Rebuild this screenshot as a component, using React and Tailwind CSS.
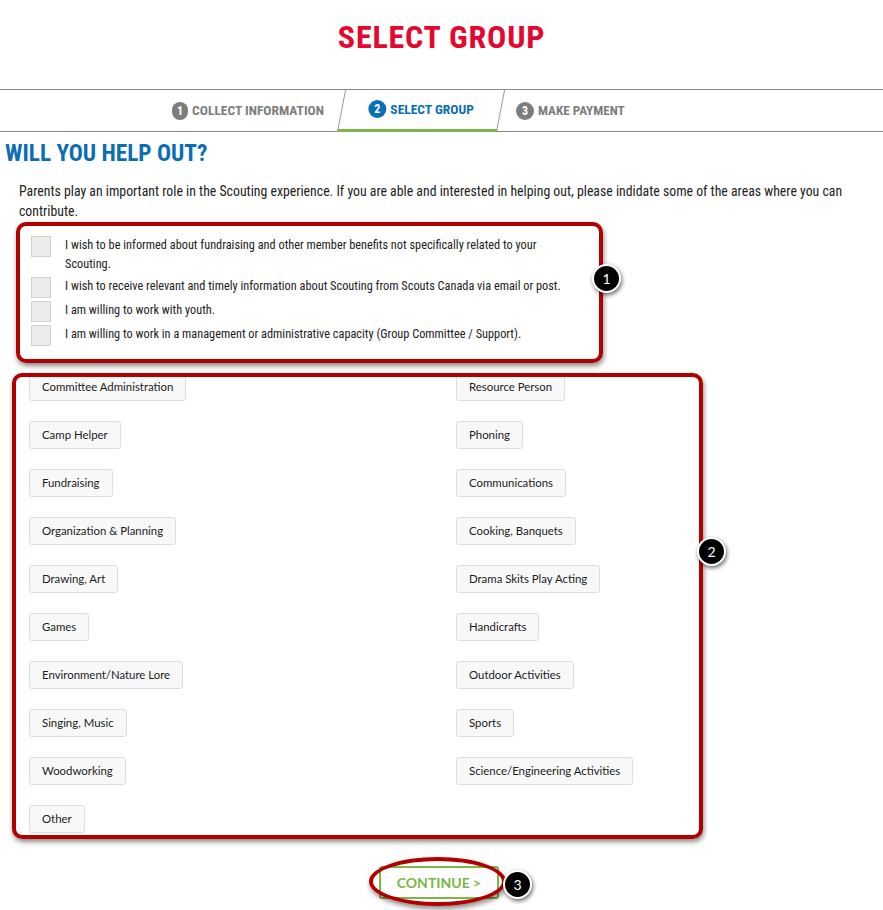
import React from 'react';

const CONDENSED = { fontFamily: '"Roboto Condensed", Roboto, "Liberation Sans", sans-serif' };
const BODY = { fontFamily: 'Lato, "Liberation Sans", Arial, sans-serif' };

const CHECKS = [
  'I wish to be informed about fundraising and other member benefits not specifically related to your Scouting.',
  'I wish to receive relevant and timely information about Scouting from Scouts Canada via email or post.',
  'I am willing to work with youth.',
  'I am willing to work in a management or administrative capacity (Group Committee / Support).',
];

const AREAS = [
  ['Committee Administration', 'Resource Person'],
  ['Camp Helper', 'Phoning'],
  ['Fundraising', 'Communications'],
  ['Organization & Planning', 'Cooking, Banquets'],
  ['Drawing, Art', 'Drama Skits Play Acting'],
  ['Games', 'Handicrafts'],
  ['Environment/Nature Lore', 'Outdoor Activities'],
  ['Singing, Music', 'Sports'],
  ['Woodworking', 'Science/Engineering Activities'],
  ['Other', null],
];

const StepDot = ({ n, active }) => (
  <span
    className={`w-[18px] h-[18px] rounded-full flex items-center justify-center text-white text-[12px] font-bold leading-none ${active ? 'bg-[#0b6db3]' : 'bg-[#7d7d7d]'}`}
  >
    {n}
  </span>
);

const AreaButton = ({ label }) => (
  <button
    className="h-[28px] px-[12px] bg-[#f8f8f8] border border-[#dedede] rounded-[3px] text-[11.4px] text-[#1c1c1c]"
    style={BODY}
  >
    {label}
  </button>
);

const Callout = ({ n, className }) => (
  <div
    className={`absolute w-[29px] h-[29px] rounded-full bg-black border-2 border-white shadow-[1px_2px_4px_rgba(0,0,0,0.6)] flex items-center justify-center text-white text-[14px] ${className}`}
    style={BODY}
  >
    {n}
  </div>
);

export default function App() {
  return (
    <div className="relative w-[883px] min-h-[910px] bg-white overflow-hidden">
      {/* title */}
      <div className="h-[89px] pt-[21px] text-center">
        <h1 className="text-[32px] leading-[32px] font-bold tracking-[0.8px] text-[#e5072f]" style={CONDENSED}>
          SELECT GROUP
        </h1>
      </div>

      {/* stepper */}
      <div className="h-[43px] border-y border-[#8a8a8a] flex items-stretch pl-[172px]" style={CONDENSED}>
        <div className="w-[152px] flex items-center gap-[4px]">
          <StepDot n="1" />
          <span className="text-[13.5px] font-bold text-[#7d7d7d] whitespace-nowrap">COLLECT INFORMATION</span>
        </div>
        <div className="ml-[17px] w-[160px] -mb-px border-x border-[#9a9a9a] border-b-[3px] border-b-[#7ab648] skew-x-[-11deg] flex items-center justify-center">
          <div className="skew-x-[11deg] flex items-center gap-[4px]">
            <StepDot n="2" active />
            <span className="text-[13.5px] font-bold text-[#0b6db3] whitespace-nowrap">SELECT GROUP</span>
          </div>
        </div>
        <div className="ml-[15px] flex items-center gap-[4px]">
          <StepDot n="3" />
          <span className="text-[13.2px] font-bold text-[#7d7d7d] whitespace-nowrap">MAKE PAYMENT</span>
        </div>
      </div>

      {/* help out */}
      <h2 className="mt-[9px] px-[5px] text-[23.3px] leading-[24px] font-bold text-[#0b6db3]" style={CONDENSED}>
        WILL YOU HELP OUT?
      </h2>
      <p className="mt-[16px] pl-[19px] pr-[15px] text-[13.8px] leading-[20px] text-[#222]" style={CONDENSED}>
        Parents play an important role in the Scouting experience. If you are able and interested in helping out, please indidate some of the areas where you can contribute.
      </p>

      <div className="mt-[15px] pl-[31px] flex flex-col gap-[3px]" style={CONDENSED}>
        {CHECKS.map((c) => (
          <label key={c} className="flex items-start gap-[14px]">
            <span className="shrink-0 w-[20px] h-[21px] bg-[#ececec] border border-[#d0d0d0]" />
            <span className="w-[500px] text-[12.3px] leading-[19px] text-[#222]">{c}</span>
          </label>
        ))}
      </div>

      <div className="mt-[27px] pl-[29px] flex flex-col gap-[20px]">
        {AREAS.map(([a, b]) => (
          <div key={a} className="grid grid-cols-[427px_1fr]">
            <div><AreaButton label={a} /></div>
            <div>{b && <AreaButton label={b} />}</div>
          </div>
        ))}
      </div>

      <div className="mt-[33px] flex justify-center">
        <button
          className="ml-[-5px] w-[120px] h-[33px] border-2 border-[#7ab648] rounded-[3px] bg-white text-[#7ab648] text-[14px] font-bold"
          style={BODY}
        >
          CONTINUE &gt;
        </button>
      </div>

      {/* annotations */}
      <div className="absolute left-[16px] top-[222px] w-[587px] h-[141px] border-4 border-[#b00000] rounded-[10px] shadow-[1px_3px_5px_rgba(0,0,0,0.45)]" />
      <Callout n="1" className="left-[592px] top-[264px]" />
      <div className="absolute left-[12px] top-[373px] w-[691px] h-[466px] border-4 border-[#b00000] rounded-[10px] shadow-[1px_3px_5px_rgba(0,0,0,0.45)]" />
      <Callout n="2" className="left-[697px] top-[537px]" />
      <div className="absolute left-[369px] top-[857px] w-[137px] h-[49px] border-4 border-[#b00000] rounded-[50%] shadow-[1px_3px_5px_rgba(0,0,0,0.45)]" />
      <Callout n="3" className="left-[503px] top-[870px]" />
    </div>
  );
}
